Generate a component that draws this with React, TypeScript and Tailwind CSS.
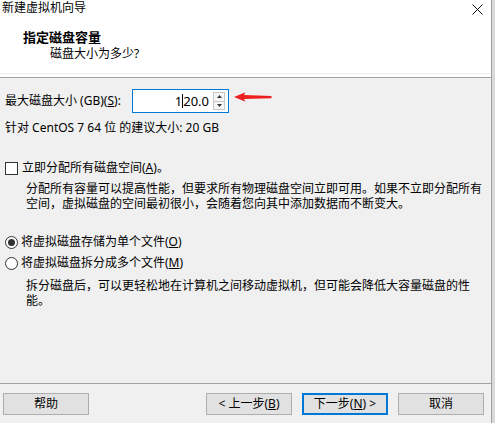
import React from "react";

function Btn({ children, primary }: { children: React.ReactNode; primary?: boolean }) {
  return (
    <div
      className={
        "w-[86px] h-[22px] flex items-center justify-center bg-[#e1e1e1] text-[12px] leading-none " +
        (primary ? "border-2 border-[#0078d7]" : "border border-[#adadad]")
      }
    >
      {children}
    </div>
  );
}

export default function App() {
  return (
    <div
      className="w-[495px] h-[423px] flex bg-[#f0f0f0] text-[12px] text-black overflow-hidden"
      style={{ fontFamily: '"Noto Sans", "Noto Sans CJK SC", sans-serif' }}
    >
      <div className="w-[492px] h-full flex flex-col border-r border-[#a0a0a0]">
        {/* header */}
        <div className="h-[78px] bg-white border-b border-[#a0a0a0] flex flex-col relative">
          <div className="h-[16px] flex items-center justify-between pl-[2px] pr-[8px]">
            <span className="leading-[16px] text-[12px]">新建虚拟机向导</span>
            <svg width="11" height="11" viewBox="0 0 11 11" className="mt-[3px]">
              <path d="M0.5 0.5 L10.5 10.5 M10.5 0.5 L0.5 10.5" stroke="#111" strokeWidth="1" />
            </svg>
          </div>
          <div className="mt-[13px] pl-[23px] text-[13px] font-bold leading-[16px]">指定磁盘容量</div>
          <div className="mt-[1px] pl-[50px] text-[12px] leading-[16px]">磁盘大小为多少?</div>
          <div className="absolute left-0 right-0 top-[73px] h-px bg-[#ececec]" />
        </div>

        {/* body */}
        <div className="flex-1 flex flex-col pl-[5px]">
          <div className="mt-[11px] h-[24px] flex items-center">
            <span className="w-[127px] leading-[16px] whitespace-nowrap">
              最大磁盘大小 (GB)(<span className="underline">S</span>):
            </span>
            <div className="w-[97px] h-[24px] bg-white border border-[#0078d7] flex items-center justify-end pr-[3px]">
              <span className="leading-[16px] flex items-center text-[13px]">
                1<span className="inline-block w-px h-[14px] bg-black" />20.0
              </span>
              <div className="ml-[4px] w-[12px] h-[18px] flex flex-col border border-[#c8c8c8] bg-[#f5f5f5]">
                <div className="flex-1 flex items-center justify-center border-b border-[#c8c8c8]">
                  <svg width="5" height="3" viewBox="0 0 5 3"><path d="M0 3 L2.5 0 L5 3Z" fill="#333" /></svg>
                </div>
                <div className="flex-1 flex items-center justify-center">
                  <svg width="5" height="3" viewBox="0 0 5 3"><path d="M0 0 L2.5 3 L5 0Z" fill="#333" /></svg>
                </div>
              </div>
            </div>
            <svg width="38" height="10" viewBox="0 0 38 10" className="ml-[5px] mt-[-8px]">
              <path d="M0 5 L11.5 0.3 L10 3 L37.5 4 L37.5 6.2 L10 7 L11.5 9.7 Z" fill="#ee1f1f" />
            </svg>
          </div>

          <div className="mt-[7px] leading-[16px] whitespace-nowrap">针对 CentOS 7 64 位 的建议大小: 20 GB</div>

          <div className="mt-[24px] h-[16px] flex items-center">
            <div className="w-[13px] h-[13px] border border-[#333] bg-white" />
            <span className="ml-[4px] leading-[16px]">
              立即分配所有磁盘空间(<span className="underline">A</span>)。
            </span>
          </div>
          <div className="mt-[5px] pl-[21px] pr-[8px] leading-[15px]">
            分配所有容量可以提高性能，但要求所有物理磁盘空间立即可用。如果不立即分配所有空间，虚拟磁盘的空间最初很小，会随着您向其中添加数据而不断变大。
          </div>

          <div className="mt-[23px] h-[16px] flex items-center">
            <div className="w-[13px] h-[13px] rounded-full border border-[#333] bg-white flex items-center justify-center">
              <div className="w-[7px] h-[7px] rounded-full bg-[#333]" />
            </div>
            <span className="ml-[3px] leading-[16px]">
              将虚拟磁盘存储为单个文件(<span className="underline">O</span>)
            </span>
          </div>
          <div className="mt-[5px] h-[16px] flex items-center">
            <div className="w-[13px] h-[13px] rounded-full border border-[#333] bg-white" />
            <span className="ml-[3px] leading-[16px]">
              将虚拟磁盘拆分成多个文件(<span className="underline">M</span>)
            </span>
          </div>
          <div className="mt-[7px] pl-[21px] pr-[15px] leading-[15px]">
            拆分磁盘后，可以更轻松地在计算机之间移动虚拟机，但可能会降低大容量磁盘的性能。
          </div>
        </div>

        {/* footer */}
        <div className="h-[40px] border-t border-[#a0a0a0] flex items-start pt-[9px] pl-[3px]">
          <Btn>帮助</Btn>
          <div className="flex-1" />
          <Btn>
            &lt; 上一步(<span className="underline">B</span>)
          </Btn>
          <div className="ml-[10px]">
            <Btn primary>
              下一步(<span className="underline">N</span>) &gt;
            </Btn>
          </div>
          <div className="ml-[10px] mr-[7px]">
            <Btn>取消</Btn>
          </div>
        </div>
      </div>
      <div className="w-[3px] h-full bg-[#dadada]" />
    </div>
  );
}
